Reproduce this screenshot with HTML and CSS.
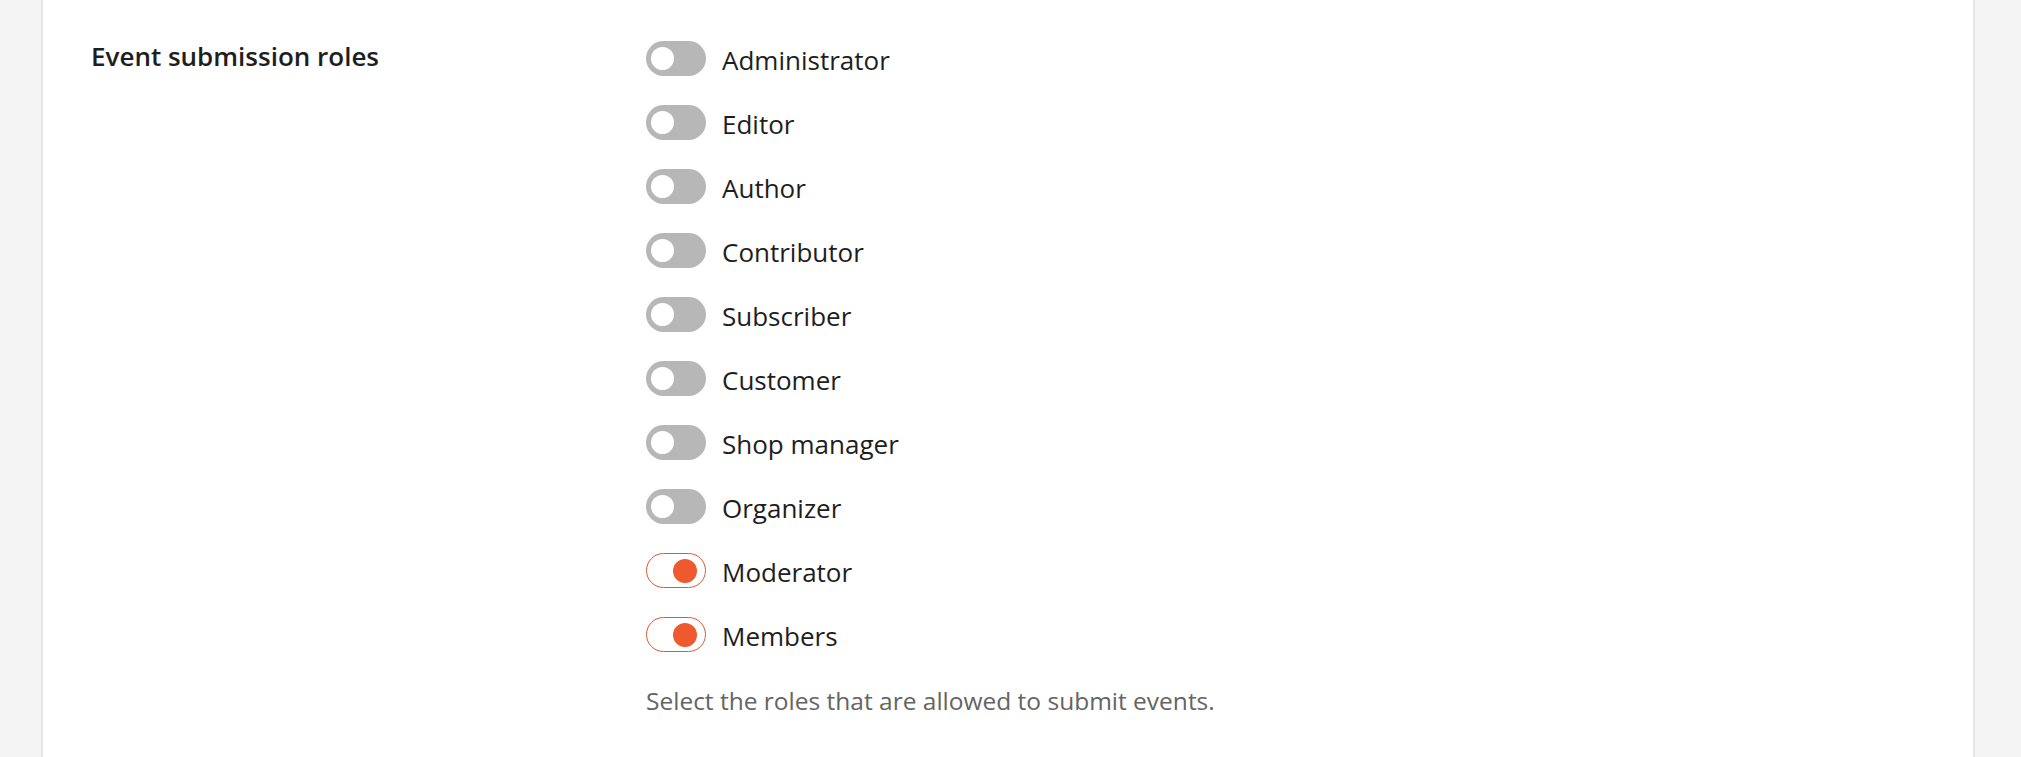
FILE: index.html
```html
<!DOCTYPE html>
<html lang="en">
<head>
<meta charset="utf-8">
<title>Event submission roles</title>
<link rel="stylesheet" href="styles.css">
</head>
<body>
<div class="card">
  <div class="setting">
    <div class="setting-label">Event submission roles</div>
    <div class="setting-control">
      <ul class="roles">
        <li class="role"><span class="toggle"></span><span class="role-name">Administrator</span></li>
        <li class="role"><span class="toggle"></span><span class="role-name">Editor</span></li>
        <li class="role"><span class="toggle"></span><span class="role-name">Author</span></li>
        <li class="role"><span class="toggle"></span><span class="role-name">Contributor</span></li>
        <li class="role"><span class="toggle"></span><span class="role-name">Subscriber</span></li>
        <li class="role"><span class="toggle"></span><span class="role-name">Customer</span></li>
        <li class="role"><span class="toggle"></span><span class="role-name">Shop manager</span></li>
        <li class="role"><span class="toggle"></span><span class="role-name">Organizer</span></li>
        <li class="role"><span class="toggle is-on"></span><span class="role-name">Moderator</span></li>
        <li class="role"><span class="toggle is-on"></span><span class="role-name">Members</span></li>
      </ul>
      <p class="help">Select the roles that are allowed to submit events.</p>
    </div>
  </div>
</div>
</body>
</html>
```

FILE: styles.css
```css
html, body {
  margin: 0;
  padding: 0;
  height: 100%;
}
body {
  background: #f4f4f4;
  font-family: "Open Sans", "Noto Sans", sans-serif;
  color: #1e1e1e;
  overflow: hidden;
}
.card {
  margin-left: 41px;
  width: 1934px;
  min-height: 100%;
  background: #fff;
  border-left: 2px solid #e6e6e6;
  border-right: 2px solid #e6e6e6;
  box-sizing: border-box;
}
.setting {
  display: flex;
  padding: 41px 0 0 48px;
}
.setting-label {
  width: 555px;
  font-size: 26px;
  font-weight: 600;
  line-height: 30px;
  color: #1e1e1e;
}
.setting-control {
  display: flex;
  flex-direction: column;
}
.roles {
  list-style: none;
  margin: 0;
  padding: 0;
  display: flex;
  flex-direction: column;
  gap: 29px;
}
.role {
  display: flex;
  align-items: center;
  gap: 16px;
  height: 35px;
}
.toggle {
  position: relative;
  width: 60px;
  height: 35px;
  box-sizing: border-box;
  border-radius: 18px;
  background: #b7b7b7;
  flex: none;
}
.toggle::after {
  content: "";
  position: absolute;
  left: 5px;
  top: 6px;
  width: 23px;
  height: 23px;
  border-radius: 50%;
  background: #fff;
}
.toggle.is-on {
  background: #fff;
  border: 1.5px solid #e0582e;
}
.toggle.is-on::after {
  left: auto;
  right: 8px;
  top: 4.5px;
  width: 24px;
  height: 24px;
  background: #ee5a2e;
}
.role-name {
  font-size: 26px;
  line-height: 30px;
  color: #1e1e1e;
  position: relative;
  top: 1px;
}
.help {
  margin: 34px 0 0;
  font-size: 24.5px;
  line-height: 30px;
  color: #646464;
}
```
